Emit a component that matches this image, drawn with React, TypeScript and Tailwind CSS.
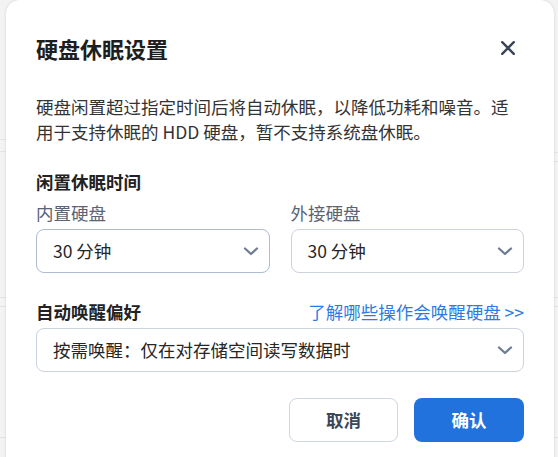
function Chevron() {
  return (
    <svg width="16" height="16" viewBox="0 0 16 16" fill="none">
      <path d="M2 5.5 L8 11 L14 5.5" stroke="#6f7d92" strokeWidth="2.3" strokeLinecap="round" strokeLinejoin="round" />
    </svg>
  );
}

function Select({ text, border }: { text: string; border: string }) {
  return (
    <div className={`mt-[4px] flex h-[44px] items-center justify-between rounded-[8px] border bg-white pl-[16px] pr-[10px] ${border}`}>
      <span className="text-[17.5px] leading-[24px] text-[#262626]">{text}</span>
      <Chevron />
    </div>
  );
}

function StripLines({ lines }: { lines: number[] }) {
  let prev = 0;
  return (
    <div className="flex w-[6px] flex-col">
      {lines.map((y, i) => {
        const h = y - prev;
        prev = y + 1;
        return <div key={i} className="border-b border-[#e4e4e4]" style={{ height: h }} />;
      })}
    </div>
  );
}

export default function App() {
  return (
    <div className="relative h-[457px] w-[558px] overflow-hidden bg-[#f3f3f3] font-['Noto_Sans_CJK_SC','Noto_Sans',sans-serif]">
      <div className="flex h-full justify-between">
        <StripLines lines={[140, 153, 300, 310, 442]} />
        <StripLines lines={[153, 163, 300, 310, 442]} />
      </div>
      <div className="absolute left-[6px] top-0 h-[490px] w-[548px] rounded-[14px] bg-white px-[30px] pt-[33px] shadow-[0_0_3px_rgba(0,0,0,0.14)]">
        <div className="flex h-[30px] items-center justify-between">
          <h1 className="text-[22px] font-bold leading-[30px] text-[#1e1e1e]">硬盘休眠设置</h1>
          <button className="flex h-[32px] w-[32px] items-center justify-center">
            <svg width="14" height="14" viewBox="0 0 14 14" fill="none">
              <path d="M1.2 1.2 L12.8 12.8 M12.8 1.2 L1.2 12.8" stroke="#3a4557" strokeWidth="2.4" strokeLinecap="round" />
            </svg>
          </button>
        </div>
        <p className="mt-[32px] text-[17.5px] leading-[24.5px] text-[#333333]">
          硬盘闲置超过指定时间后将自动休眠，以降低功耗和噪音。适用于支持休眠的 HDD 硬盘，暂不支持系统盘休眠。
        </p>
        <div className="mt-[26px] text-[17.5px] font-bold leading-[24px] text-[#222222]">闲置休眠时间</div>
        <div className="mt-[7px] grid grid-cols-2 gap-x-[21px]">
          <div>
            <div className="text-[17.5px] leading-[24px] text-[#5b6374]">内置硬盘</div>
            <Select text="30 分钟" border="border-[#aebbd0]" />
          </div>
          <div>
            <div className="text-[17.5px] leading-[24px] text-[#5b6374]">外接硬盘</div>
            <Select text="30 分钟" border="border-[#cbd3df]" />
          </div>
        </div>
        <div className="mt-[27px] flex items-center justify-between leading-[24px]">
          <span className="text-[17.5px] font-bold text-[#222222]">自动唤醒偏好</span>
          <span className="text-[17.5px] text-[#2c7be5]">了解哪些操作会唤醒硬盘 &gt;&gt;</span>
        </div>
        <Select text="按需唤醒：仅在对存储空间读写数据时" border="border-[#cbd3df]" />
        <div className="mt-[26px] flex justify-end gap-[16px]">
          <button className="flex h-[44px] w-[109px] items-center justify-center rounded-[8px] border border-[#cfd7e2] bg-white text-[17.5px] font-bold text-[#3c4759]">
            取消
          </button>
          <button className="flex h-[44px] w-[110px] items-center justify-center rounded-[8px] bg-[#2272de] text-[17.5px] font-bold text-white">
            确认
          </button>
        </div>
      </div>
    </div>
  );
}
